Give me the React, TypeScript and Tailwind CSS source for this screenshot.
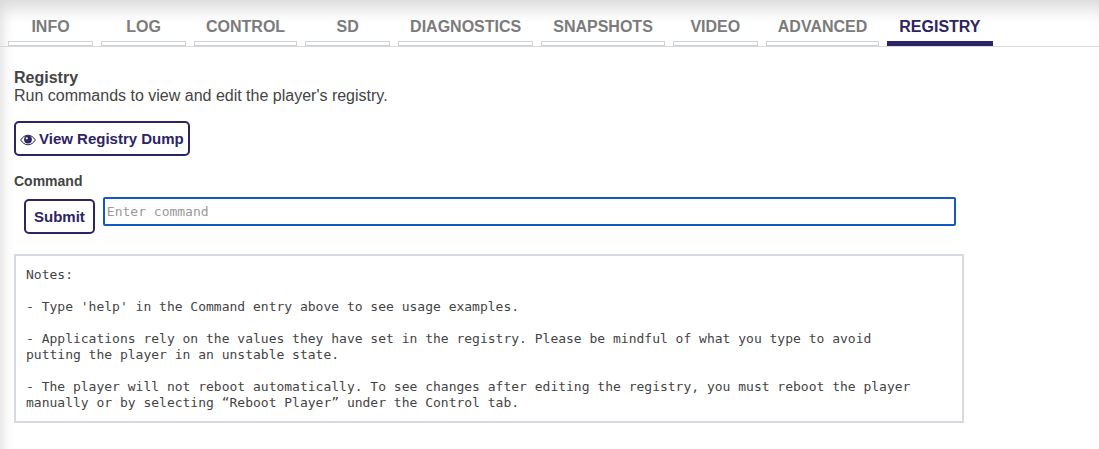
import { useState } from "react"
import clsx from "clsx"

const TABS = ["INFO", "LOG", "CONTROL", "SD", "DIAGNOSTICS", "SNAPSHOTS", "VIDEO", "ADVANCED", "REGISTRY"]

const NOTES = [
  "Notes:",
  "- Type 'help' in the Command entry above to see usage examples.",
  "- Applications rely on the values they have set in the registry. Please be mindful of what you type to avoid putting the player in an unstable state.",
  "- The player will not reboot automatically. To see changes after editing the registry, you must reboot the player manually or by selecting “Reboot Player” under the Control tab.",
]

const buttonClass =
  "flex h-[35px] items-center rounded-[5px] border-2 border-[#2d2463] bg-white pt-[2px] text-[15px] font-bold text-[#2d2463]"

function EyeIcon() {
  return (
    <svg viewBox="0 0 16 12" className="h-3 w-4" fill="none" aria-hidden="true">
      <path
        d="M.7 6C2.300 3.200 5 1.200 8 1.200S13.700 3.200 15.300 6C13.700 8.800 11 10.800 8 10.800S2.300 8.800 .7 6Z"
        fill="#fff"
        stroke="currentColor"
        strokeWidth="1"
      />
      <circle cx="8" cy="5.500" r="3.900" fill="currentColor" />
      <circle cx="6.800" cy="4.300" r="1.100" fill="#fff" />
    </svg>
  )
}

function TabBar({ active, onSelect }: { active: string; onSelect: (tab: string) => void }) {
  return (
    <nav className="flex gap-2 border-b border-[#d3d9dd] px-2">
      {TABS.map((tab) => (
        <a
          key={tab}
          href={`#${tab.toLowerCase()}`}
          onClick={() => onSelect(tab)}
          className={clsx(
            "flex min-w-[85px] flex-col text-center text-base font-bold",
            tab === active ? "text-[#2d2463]" : "text-[#7b7b7b]"
          )}
        >
          <span className="px-3 pt-[17px] pb-1 leading-5">{tab}</span>
          <span
            className={clsx(
              "h-[5px] border",
              tab === active ? "border-[#2d2463] bg-[#2d2463]" : "border-[#cfd2d5] bg-white"
            )}
          />
        </a>
      ))}
    </nav>
  )
}

export default function App() {
  const [active, setActive] = useState("REGISTRY")
  const [command, setCommand] = useState("")

  return (
    <div className="min-h-screen bg-white font-['Liberation_Sans',Arial,sans-serif] text-[#444] shadow-[inset_0_18px_18px_-10px_#d8d8d8,inset_16px_0_16px_-16px_#d8d8d8]">
      <TabBar active={active} onSelect={setActive} />

      <main className="max-w-[978px] px-[14px] pt-[22px] pb-6">
        <h1 className="text-base leading-[18px] font-bold">Registry</h1>
        <p className="text-base leading-[18px]">Run commands to view and edit the player's registry.</p>

        <button type="button" className={clsx(buttonClass, "mt-4 gap-[3px] px-1")}>
          <EyeIcon />
          View Registry Dump
        </button>

        <form onSubmit={(e) => e.preventDefault()}>
          <label htmlFor="command" className="mt-[15px] block text-sm leading-5 font-bold">
            Command
          </label>
          <div className="mt-[6px] flex items-start gap-2 pr-2 pl-[10px]">
            <button type="submit" className={clsx(buttonClass, "mt-[2px] px-2")}>
              Submit
            </button>
            <input
              id="command"
              type="text"
              autoFocus
              value={command}
              onChange={(e) => setCommand(e.target.value)}
              placeholder="Enter command"
              className="h-[29px] min-w-0 flex-1 rounded-[2px] border-2 border-[#1259c3] px-[2px] font-['DejaVu_Sans_Mono',monospace] text-[13px] outline-none placeholder:text-[#999]"
            />
          </div>
        </form>

        <div className="mt-5 flex flex-col gap-4 border-2 border-[#d5dae1] pt-[11px] pr-10 pb-[10px] pl-[10px] font-['DejaVu_Sans_Mono',monospace] text-[13px] leading-4">
          {NOTES.map((note) => (
            <p key={note}>{note}</p>
          ))}
        </div>
      </main>
    </div>
  )
}
